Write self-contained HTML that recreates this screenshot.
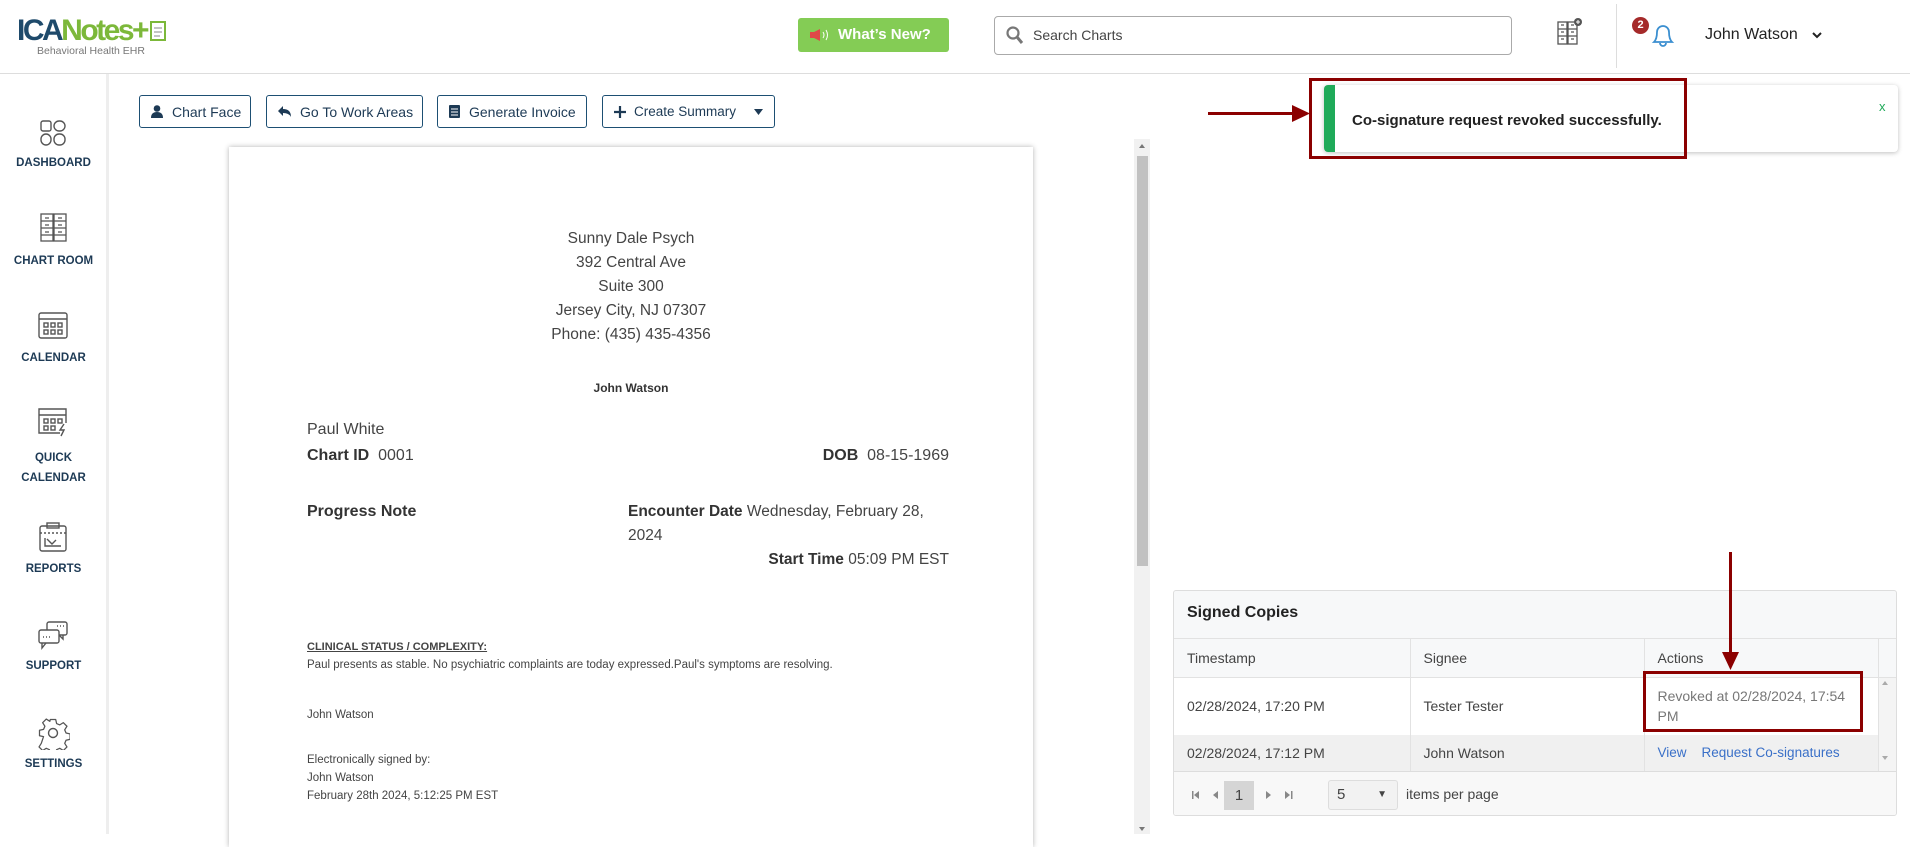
<!DOCTYPE html>
<html><head><meta charset="utf-8"><style>
*{margin:0;padding:0;box-sizing:border-box}
body{width:1910px;height:834px;overflow:hidden;background:#fff;font-family:"Liberation Sans",sans-serif;color:#333;position:relative}
.a{position:absolute;white-space:nowrap}
.btn{position:absolute;top:95px;height:33px;border:1px solid #1d4f73;border-radius:3px;color:#1d3a55;font-size:14px;display:flex;align-items:center;padding-left:11px;gap:9px;white-space:nowrap}
.nav{position:absolute;left:0;width:107px;text-align:center;font-size:11.5px;font-weight:bold;color:#1d3a55}
.doc{font-size:15.5px;color:#444}
.sm{font-size:11.5px;color:#444}
td{border-right:1px solid #e2e2e2;padding-left:13px;font-size:14px;color:#444}
</style></head><body>
<!-- header -->
<div class="a" style="left:17px;top:14px;font-size:30px;font-weight:bold;letter-spacing:-2.5px;line-height:34px"><span style="color:#1e4a6b">ICA</span><span style="color:#7cb83a">Notes+</span></div>
<svg class="a" style="left:148px;top:20px" width="22" height="24"><rect x="3" y="2" width="14" height="18" fill="#fff" stroke="#7cb83a" stroke-width="2"/><path d="M6 8h8M6 12h8M6 16h6" stroke="#888"/></svg>
<div class="a" style="left:37px;top:45px;font-size:10.5px;color:#777">Behavioral Health EHR</div>
<div class="a" style="left:798px;top:18px;width:151px;height:34px;background:#84cc55;border-radius:3px;color:#fff;font-weight:bold;font-size:15px;line-height:34px;padding-left:40px">What’s New?</div>
<svg class="a" style="left:808px;top:28px" width="22" height="14"><path d="M2 4h4l6-3v12l-6-3H2z" fill="#e04848"/><path d="M15 4q2 3 0 6M18 2q3 5 0 10" stroke="#fff" fill="none"/></svg>
<div class="a" style="left:994px;top:16px;width:518px;height:39px;border:1px solid #aaa;border-radius:4px"></div>
<svg class="a" style="left:1006px;top:26px" width="18" height="19"><circle cx="7" cy="7" r="5.5" stroke="#777" stroke-width="2.2" fill="none"/><path d="M11 11l5 6" stroke="#777" stroke-width="3"/></svg>
<div class="a" style="left:1033px;top:27px;font-size:14px;color:#444">Search Charts</div>
<svg class="a" style="left:1556px;top:18px" width="26" height="30"><g stroke="#555" fill="none" stroke-width="1.3"><rect x="2" y="4" width="9" height="22"/><rect x="12" y="4" width="9" height="22"/><path d="M2 11h9M2 18h9M12 11h9M12 18h9M5 7h3M5 14h3M5 21h3M15 7h3M15 14h3M15 21h3"/></g><circle cx="22" cy="4" r="4" fill="#555"/><path d="M20 4h4M22 2v4" stroke="#fff"/></svg>
<div class="a" style="left:1616px;top:4px;width:1px;height:64px;background:#ddd"></div>
<svg class="a" style="left:1648px;top:18px" width="30" height="32"><path d="M6 24q3-3 3-10a6 6 0 0 1 12 0q0 7 3 10z M12 25a3 3 0 0 0 6 0" stroke="#3b8fd0" stroke-width="1.8" fill="none"/></svg>
<div class="a" style="left:1632px;top:17px;width:17px;height:17px;border-radius:50%;background:#a52a2a;color:#fff;font-size:11px;font-weight:bold;text-align:center;line-height:17px">2</div>
<div class="a" style="left:1705px;top:26px;font-size:16px;color:#222">John Watson</div>
<svg class="a" style="left:1812px;top:31px" width="10" height="8"><path d="M1 2l4 4 4-4" stroke="#222" stroke-width="2" fill="none"/></svg>
<div class="a" style="left:0;top:73px;width:1910px;height:1px;background:#ddd"></div>
<!-- sidebar -->
<div class="a" style="left:106px;top:74px;width:3px;height:760px;background:#eee"></div>
<svg class="a" style="left:40px;top:120px" width="26" height="26" stroke="#555" fill="none" stroke-width="1.4"><rect x="1" y="1" width="10" height="10" rx="2"/><rect x="14" y="1" width="11" height="10" rx="5"/><rect x="1" y="14" width="10" height="11" rx="5"/><rect x="14" y="14" width="11" height="11" rx="5"/></svg>
<div class="nav" style="top:157px">DASHBOARD</div>
<svg class="a" style="left:40px;top:213px" width="28" height="30" stroke="#555" fill="none" stroke-width="1.3"><rect x="1" y="1" width="12" height="27"/><rect x="14" y="1" width="12" height="27"/><path d="M1 8h12M1 15h12M1 22h12M14 8h12M14 15h12M14 22h12M5 5h4M5 12h4M5 19h4M18 5h4M18 12h4M18 19h4"/></svg>
<div class="nav" style="top:255px">CHART ROOM</div>
<svg class="a" style="left:38px;top:310px" width="30" height="30" stroke="#555" fill="none" stroke-width="1.4"><rect x="1" y="3" width="28" height="25" rx="2"/><path d="M1 9h28"/><rect x="6" y="13" width="4" height="4"/><rect x="13" y="13" width="4" height="4"/><rect x="20" y="13" width="4" height="4"/><rect x="6" y="20" width="4" height="4"/><rect x="13" y="20" width="4" height="4"/><rect x="20" y="20" width="4" height="4"/></svg>
<div class="nav" style="top:352px">CALENDAR</div>
<svg class="a" style="left:38px;top:406px" width="32" height="32" stroke="#555" fill="none" stroke-width="1.4"><path d="M22 27H1V3h27v14"/><path d="M1 9h27"/><rect x="6" y="13" width="4" height="4"/><rect x="13" y="13" width="4" height="4"/><rect x="20" y="13" width="4" height="4"/><rect x="6" y="20" width="4" height="4"/><rect x="13" y="20" width="4" height="4"/><path d="M26 18l-4 6h4l-3 6"/></svg>
<div class="nav" style="top:448px;line-height:20px">QUICK<br>CALENDAR</div>
<svg class="a" style="left:39px;top:522px" width="28" height="30" stroke="#555" fill="none" stroke-width="1.4"><rect x="1" y="4" width="26" height="25" rx="2"/><rect x="8" y="1" width="12" height="5"/><path d="M1 11h26" stroke-dasharray="2 2"/><path d="M6 16v8h16M8 17l5 5 4-4"/></svg>
<div class="nav" style="top:563px">REPORTS</div>
<svg class="a" style="left:37px;top:620px" width="32" height="30" stroke="#555" fill="none" stroke-width="1.4"><rect x="10" y="2" width="20" height="13" rx="2"/><path d="M26 15v4l-4-4"/><rect x="2" y="10" width="20" height="13" rx="2" fill="#fff"/><path d="M5 23v5l4-5"/><path d="M6 17h1M9 17h1M12 17h1M20 6h1M23 6h1M26 6h1"/></svg>
<div class="nav" style="top:660px">SUPPORT</div>
<svg class="a" style="left:36px;top:716px" width="34" height="34" viewBox="0 0 34 34" stroke="#555" fill="none" stroke-width="1.4" stroke-linejoin="round"><path d="M14 2h6l1 4.5 3.5 1.5 4-2.5 4 4-2.5 4 1.5 3.5 4.5 1v6l-4.5 1-1.5 3.5 2.5 4-4 4-4-2.5-3.5 1.5-1 4.5h-6l-1-4.5-3.5-1.5-4 2.5-4-4 2.5-4L6.5 21 2 20v-6l4.5-1L8 9.5 5.5 5.5l4-4 4 2.5z" transform="translate(17 17) scale(.9) translate(-17 -17)"/><circle cx="17" cy="17" r="4.5"/></svg>
<div class="nav" style="top:758px">SETTINGS</div>
<!-- buttons -->
<div class="btn" style="left:139px;width:112px"><svg width="12" height="13"><circle cx="6" cy="3.5" r="3.3" fill="#1d3a55"/><path d="M0 13q0-6 6-6t6 6z" fill="#1d3a55"/></svg>Chart Face</div>
<div class="btn" style="left:266px;width:157px"><svg width="13" height="11"><path d="M0 5l5-5v3q8 0 8 8-2-4-8-4v3z" fill="#1d3a55"/></svg>Go To Work Areas</div>
<div class="btn" style="left:437px;width:150px"><svg width="11" height="13"><rect width="11" height="13" rx="1" fill="#1d3a55"/><path d="M2 4h7M2 7h7M2 10h7" stroke="#fff"/></svg>Generate Invoice</div>
<div class="btn" style="left:602px;width:173px;font-size:13.5px;gap:8px"><svg width="12" height="12"><path d="M6 0v12M0 6h12" stroke="#1d3a55" stroke-width="2.2"/></svg>Create Summary<svg style="margin-left:10px" width="9" height="6"><path d="M0 0h9L4.5 6z" fill="#1d3a55"/></svg></div>
<!-- document -->
<div class="a" style="left:229px;top:147px;width:804px;height:700px;background:#fff;box-shadow:0 0 5px rgba(0,0,0,.3)"></div>
<div class="a doc" style="left:229px;width:804px;text-align:center;top:227px;line-height:24px;white-space:normal">Sunny Dale Psych<br>392 Central Ave<br>Suite 300<br>Jersey City, NJ 07307<br>Phone: (435) 435-4356</div>
<div class="a" style="left:229px;width:804px;text-align:center;top:381px;font-size:12px;font-weight:bold;color:#333">John Watson</div>
<div class="a doc" style="left:307px;top:421px;font-size:16px">Paul White</div>
<div class="a doc" style="left:307px;top:447px;font-size:16px"><b style="color:#333">Chart ID</b>&nbsp; 0001</div>
<div class="a doc" style="right:961px;top:447px;font-size:16px"><b style="color:#333">DOB</b>&nbsp; 08-15-1969</div>
<div class="a doc" style="left:307px;top:503px;font-size:16px;font-weight:bold;color:#333">Progress Note</div>
<div class="a doc" style="left:628px;top:503px;font-size:15.5px"><b style="color:#333">Encounter Date</b> Wednesday, February 28,</div>
<div class="a doc" style="left:628px;top:527px;font-size:15.5px">2024</div>
<div class="a doc" style="right:961px;top:551px;font-size:15.5px"><b style="color:#333">Start Time</b> 05:09 PM EST</div>
<div class="a sm" style="left:307px;top:641px;font-weight:bold;text-decoration:underline;font-size:11px">CLINICAL STATUS / COMPLEXITY:</div>
<div class="a sm" style="left:307px;top:659px">Paul presents as stable. No psychiatric complaints are today expressed.Paul's symptoms are resolving.</div>
<div class="a sm" style="left:307px;top:709px">John Watson</div>
<div class="a sm" style="left:307px;top:751px;line-height:18px">Electronically signed by:<br>John Watson<br>February 28th 2024, 5:12:25 PM EST</div>
<!-- scrollbar -->
<div class="a" style="left:1134px;top:139px;width:16px;height:695px;background:#f1f1f1"></div>
<div class="a" style="left:1137px;top:156px;width:11px;height:410px;background:#c1c1c1"></div>
<svg class="a" style="left:1138px;top:143px" width="8" height="6"><path d="M4 1L7 5H1z" fill="#777"/></svg>
<svg class="a" style="left:1138px;top:826px" width="8" height="6"><path d="M4 5L7 1H1z" fill="#777"/></svg>
<!-- toast -->
<div class="a" style="left:1324px;top:85px;width:574px;height:67px;background:#fff;border-radius:4px;box-shadow:0 1px 5px rgba(0,0,0,.25);overflow:hidden"><div style="width:11px;height:100%;background:#1faa59"></div></div>
<div class="a" style="left:1352px;top:112px;font-size:15px;font-weight:bold;color:#222">Co-signature request revoked successfully.</div>
<div class="a" style="left:1879px;top:99px;font-size:13px;color:#1faa59">x</div>
<div class="a" style="left:1309px;top:78px;width:378px;height:81px;border:3px solid #8b0000"></div>
<div class="a" style="left:1208px;top:112px;width:88px;height:3px;background:#8b0000"></div>
<svg class="a" style="left:1292px;top:105px" width="18" height="17"><path d="M0 0l18 8.5L0 17z" fill="#8b0000"/></svg>
<!-- signed copies -->
<div class="a" style="left:1173px;top:590px;width:724px;height:226px;border:1px solid #ddd;border-radius:3px;background:#f7f8f9;overflow:hidden">
<div style="height:47px;padding:13px 0 0 13px;font-size:16px;font-weight:bold;color:#222">Signed Copies</div>
<table style="border-collapse:collapse;width:722px;table-layout:fixed;border-top:1px solid #e2e2e2">
<colgroup><col style="width:236px"><col style="width:234px"><col style="width:234px"><col style="width:18px"></colgroup>
<tr style="height:39px;background:#f7f8f9"><td>Timestamp</td><td>Signee</td><td>Actions</td><td style="border:0"></td></tr>
<tr style="height:57px;background:#fff;border-top:1px solid #e2e2e2"><td>02/28/2024, 17:20 PM</td><td>Tester Tester</td><td style="color:#777;line-height:20px;white-space:normal;padding-right:14px">Revoked at 02/28/2024, 17:54 PM</td><td style="border:0;background:#f4f4f4"></td></tr>
<tr style="height:36px;background:#f0f0f0"><td>02/28/2024, 17:12 PM</td><td>John Watson</td><td style="color:#3a70c8;white-space:nowrap;font-size:13.5px">View&nbsp;&nbsp;&nbsp; Request Co-signatures</td><td style="border:0;background:#f4f4f4"></td></tr>
</table>
<div style="border-top:1px solid #ddd;height:47px;position:relative;background:#f8f8f8">
<svg class="a" style="left:18px;top:18px" width="60" height="10" fill="#888"><rect x="0" y="1" width="1.5" height="8"/><path d="M7 1v8L2 5z"/><path d="M26 1v8l-5-4z"/></svg>
<div class="a" style="left:50px;top:9px;width:30px;height:29px;background:#d5d5d5;font-size:15px;text-align:center;line-height:29px;color:#444">1</div>
<svg class="a" style="left:90px;top:18px" width="40" height="10" fill="#888"><path d="M2 1v8l5-4z"/><path d="M21 1v8l5-4z"/><rect x="27" y="1" width="1.5" height="8"/></svg>
<div class="a" style="left:154px;top:8px;width:70px;height:30px;border:1px solid #ddd;border-radius:3px;background:#f2f2f2;font-size:15px;line-height:28px;padding-left:8px;color:#444">5<span style="position:absolute;right:10px;font-size:10px">▼</span></div>
<div class="a" style="left:232px;top:14px;font-size:14px;color:#444">items per page</div>
</div></div>
<svg class="a" style="left:1881px;top:680px" width="8" height="6"><path d="M4 1L7 5H1z" fill="#aaa"/></svg>
<svg class="a" style="left:1881px;top:755px" width="8" height="6"><path d="M4 5L7 1H1z" fill="#aaa"/></svg>
<div class="a" style="left:1643px;top:671px;width:220px;height:61px;border:3px solid #8b0000"></div>
<div class="a" style="left:1729px;top:552px;width:3px;height:105px;background:#8b0000"></div>
<svg class="a" style="left:1722px;top:652px" width="17" height="18"><path d="M0 0h17L8.5 18z" fill="#8b0000"/></svg>
</body></html>
